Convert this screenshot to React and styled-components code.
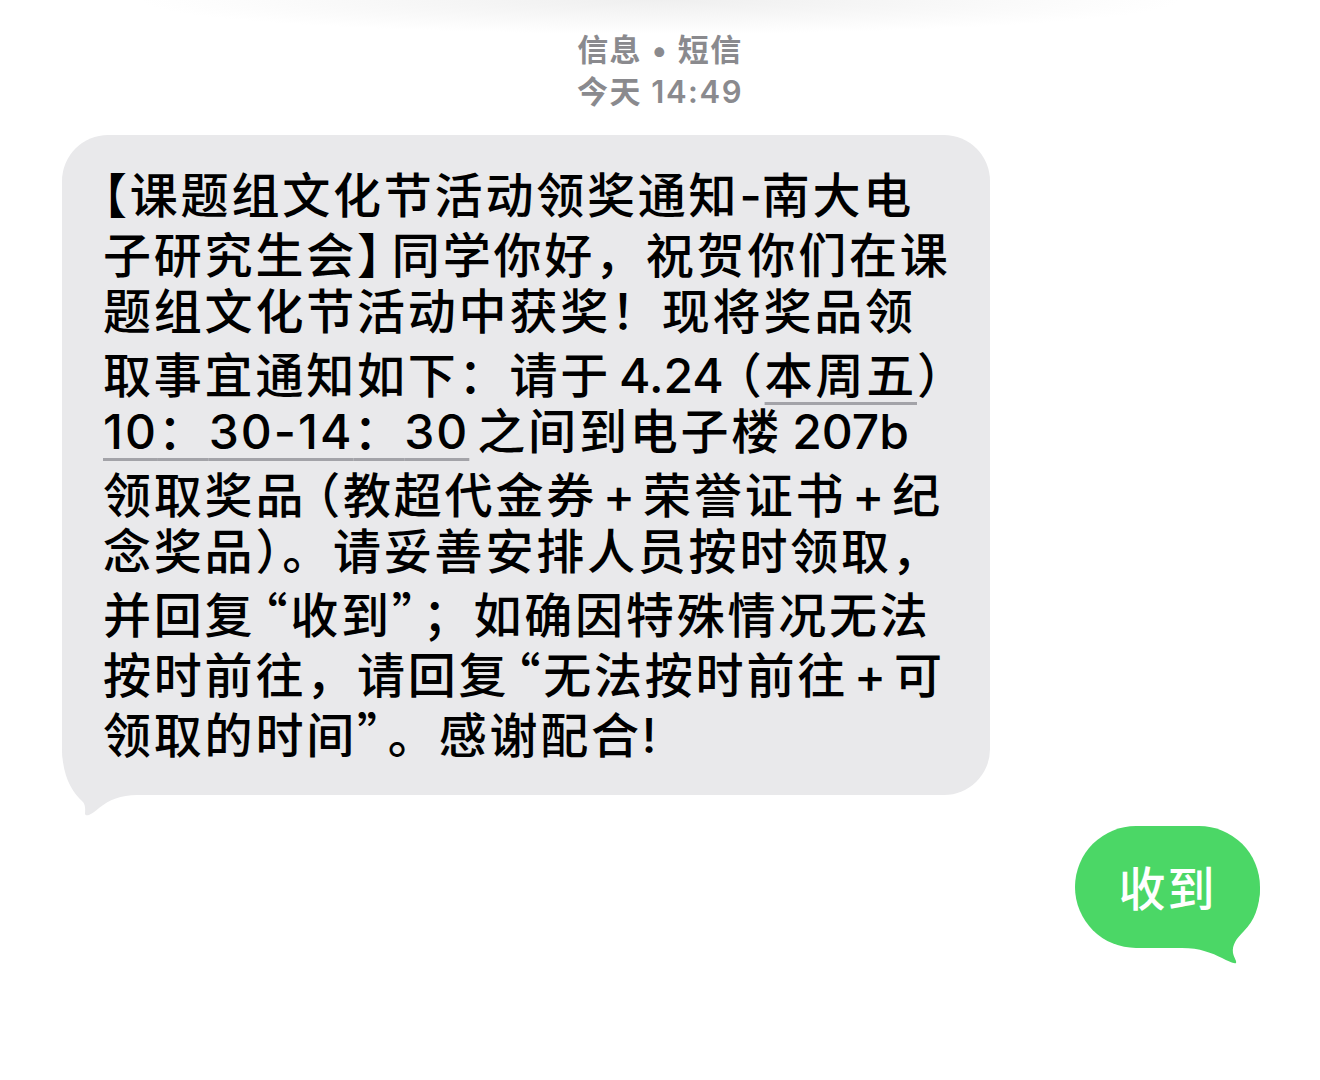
import React from 'react';
import styled, { createGlobalStyle } from 'styled-components';

const GlobalStyle = createGlobalStyle`
    html, body {
        margin: 0;
        padding: 0;
        background: #ffffff;
    }
    body {
        font-family: Inter, "Noto Sans CJK SC", sans-serif;
        -webkit-font-smoothing: antialiased;
    }
`;

const Page = styled.div`
    width: 1320px;
    height: 1080px;
    box-sizing: border-box;
    padding-top: 29px;
    display: flex;
    flex-direction: column;
    background:
        radial-gradient(ellipse 520px 34px at 50% 0, #efefef 0%, rgba(255, 255, 255, 0) 100%),
        #ffffff;
`;

const Header = styled.div`
    display: flex;
    flex-direction: column;
    align-items: center;
    color: #8a8a8e;
    font-family: Inter, "Noto Sans CJK SC", sans-serif;
    font-size: 31px;
    font-weight: 600;
    line-height: 42px;
    letter-spacing: 1.5px;
`;

const Thread = styled.div`
    display: flex;
    flex-direction: column;
    margin-top: 22px;
`;

const IncomingRow = styled.div`
    display: flex;
    padding-left: 62px;
`;

const OutgoingRow = styled.div`
    display: flex;
    justify-content: flex-end;
    padding-right: 60px;
    margin-top: 31px;
`;

const Bubble = styled.div`
    position: relative;
    box-sizing: border-box;
    background: ${p => (p.$out ? '#4bd766' : '#e9e9eb')};
    color: ${p => (p.$out ? '#ffffff' : '#000000')};
    border-radius: ${p => (p.$out ? '61px' : '46px')};
    font-size: 48px;
    font-weight: 500;
    line-height: 60px;
    letter-spacing: 2.8px;
`;

const IncomingBubble = styled(Bubble)`
    width: 928px;
    padding: 27px 30px 33px 41px;
`;

const OutgoingBubble = styled(Bubble)`
    width: 185px;
    height: 122px;
    display: flex;
    align-items: center;
    justify-content: center;
    font-size: 47px;
    letter-spacing: 2px;
    padding-top: 4px;
`;

const Line = styled.span`
    display: block;
    height: 60px;
    white-space: nowrap;
    position: relative;
    z-index: 1;
`;

const Latin = styled.span`
    letter-spacing: ${p => p.$spacing || 0}px;
`;

const Gap = styled.span`
    display: inline-block;
    width: ${p => p.$w}px;
`;

const Punct = styled.span`
    font-family: "Noto Sans CJK SC", sans-serif;
    font-feature-settings: "halt" 1;
`;

const Detected = styled.span`
    text-decoration: underline;
    text-decoration-color: #a3a3a8;
    text-decoration-thickness: 3px;
    text-underline-offset: 9px;
`;

const Tail = styled.svg`
    position: absolute;
    display: block;
    pointer-events: none;
`;

const IncomingTail = styled(Tail)`
    left: -7px;
    bottom: -25px;
`;

const OutgoingTail = styled(Tail)`
    right: -2px;
    bottom: -16px;
`;

const Text = styled.span`
    position: relative;
    z-index: 1;
`;

const Plus = () => (
    <>
        <Gap $w={6} />
        <Latin>+</Latin>
        <Gap $w={8} />
    </>
);

const App = () => {
    return (
        <>
            <GlobalStyle />
            <Page>
                <Header>
                    <span>信息 • 短信</span>
                    <span>今天 14:49</span>
                </Header>
                <Thread>
                    <IncomingRow>
                        <IncomingBubble>
                            <IncomingTail width="105" height="85" viewBox="0 0 105 85">
                                <path
                                    d="M7 0 L7 12 C7 40 16 56 28 67 C31 71 30 76 30 79 C31 82 36 80 44 73 C54 65 66 60 82 60 L105 60 L105 0 Z"
                                    fill="#e9e9eb"
                                />
                            </IncomingTail>
                            <Line>
                                <Punct>【</Punct>课题组文化节活动领奖通知<Latin>-</Latin>南大电
                            </Line>
                            <Line>
                                子研究生会<Punct>】</Punct>
                                <Gap $w={8} />
                                同学你好，祝贺你们在课
                            </Line>
                            <Line>题组文化节活动中获奖！现将奖品领</Line>
                            <Line>
                                取事宜通知如下：请于<Gap $w={8} />
                                <Latin>4.24</Latin>
                                <Gap $w={14} />
                                <Punct>（</Punct>
                                <Detected>本周五</Detected>）
                            </Line>
                            <Line>
                                <Detected>
                                    <Latin $spacing={2}>10</Latin>：<Latin $spacing={2}>30-14</Latin>：
                                    <Latin $spacing={2}>30</Latin>
                                </Detected>
                                <Gap $w={8} />
                                之间到电子楼<Gap $w={10} />
                                <Latin>207b</Latin>
                            </Line>
                            <Line>
                                领取奖品<Gap $w={10} />
                                <Punct>（</Punct>教超代金券<Plus />荣誉证书<Plus />纪
                            </Line>
                            <Line>念奖品）。请妥善安排人员按时领取，</Line>
                            <Line>
                                并回复<Gap $w={8} />
                                <Punct>“</Punct>收到<Punct>”</Punct>
                                <Gap $w={4} />；如确因特殊情况无法
                            </Line>
                            <Line>
                                按时前往，请回复<Gap $w={7} />
                                <Punct>“</Punct>无法按时前往<Plus />可
                            </Line>
                            <Line>
                                领取的时间<Punct>”</Punct>
                                <Gap $w={4} />
                                。感谢配合<Latin>!</Latin>
                            </Line>
                        </IncomingBubble>
                    </IncomingRow>
                    <OutgoingRow>
                        <OutgoingBubble $out>
                            <OutgoingTail width="80" height="77" viewBox="0 0 80 77">
                                <path
                                    d="M0 0 L78 0 C78 20 72 34 62 44 C54 52 50 58 51 66 C52 71 55 74 54 76 C52 77 46 74 40 71 C30 66 18 61 0 61 Z"
                                    fill="#4bd766"
                                />
                            </OutgoingTail>
                            <Text>收到</Text>
                        </OutgoingBubble>
                    </OutgoingRow>
                </Thread>
            </Page>
        </>
    );
};

export default App;
